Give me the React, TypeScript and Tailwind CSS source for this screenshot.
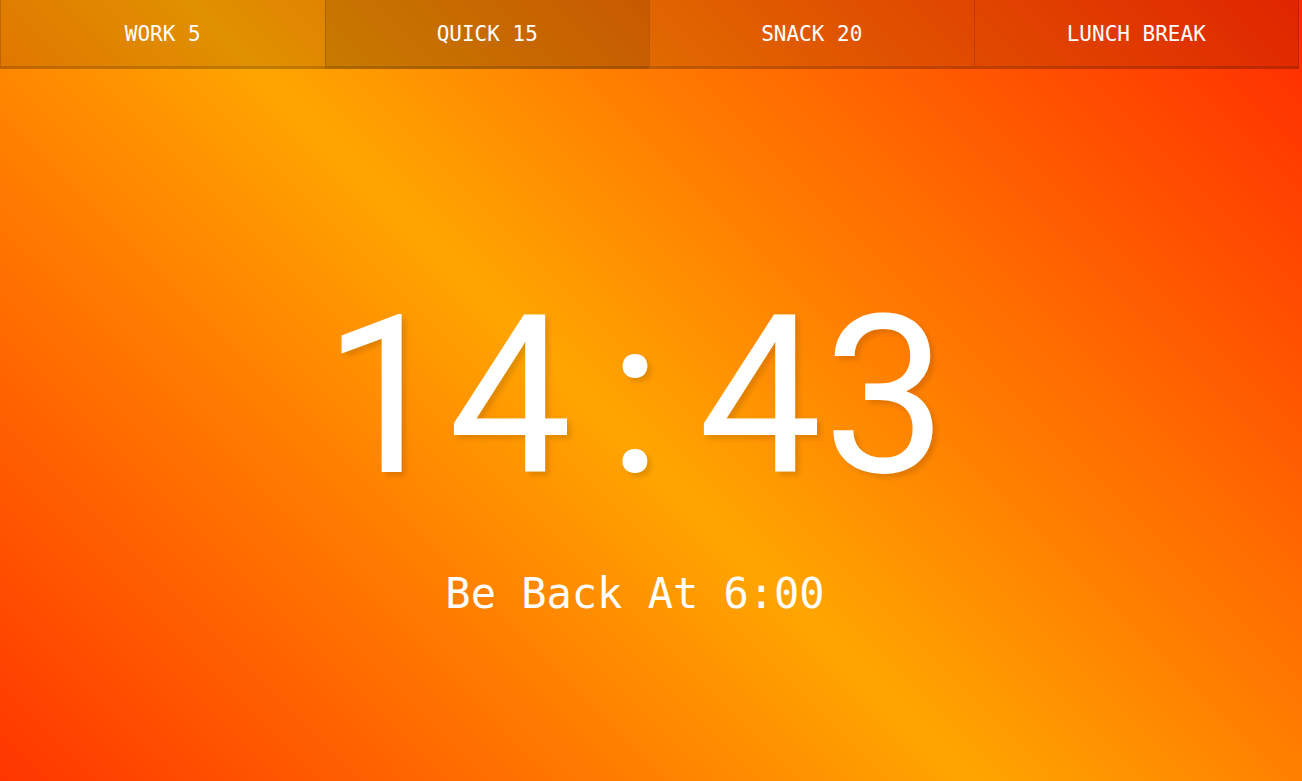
import React from "react";

const buttons = [
  { label: "WORK 5", active: false },
  { label: "QUICK 15", active: true },
  { label: "SNACK 20", active: false },
  { label: "LUNCH BREAK", active: false },
];

const clock = ["1", "4", ":", "4", "3"];

export default function App() {
  return (
    <div className="w-full h-[781px] overflow-hidden flex flex-col bg-[linear-gradient(45deg,#ff3500_0%,#ffa500_46.6%,#ff2a00_100%)] [font-family:'DejaVu_Sans_Mono',monospace] text-white">
      <div className="flex mr-[3px] shrink-0">
        {buttons.map((b) => (
          <button
            key={b.label}
            className={
              "flex-1 h-[69px] flex items-center justify-center border-l border-black/15 border-b-[3px] border-b-black/15 text-[21px] leading-none text-white last:border-r " +
              (b.active ? "bg-black/[0.22]" : "bg-black/[0.12]")
            }
          >
            <span className="pt-[3px]">{b.label}</span>
          </button>
        ))}
      </div>
      <div className="flex-1 flex flex-col items-center pr-8 pt-[222px]">
        <div className="flex h-[212px] items-center [font-family:Roboto,'DejaVu_Sans',sans-serif] font-normal text-[220px] leading-none [text-shadow:4px_4px_5px_rgba(0,0,0,0.12)]">
          {clock.map((c, i) => (
            <span key={i} className="w-[125px] text-center">
              {c}
            </span>
          ))}
        </div>
        <div className="mt-[70px] text-[42px] leading-none">Be Back At 6:00</div>
      </div>
    </div>
  );
}
